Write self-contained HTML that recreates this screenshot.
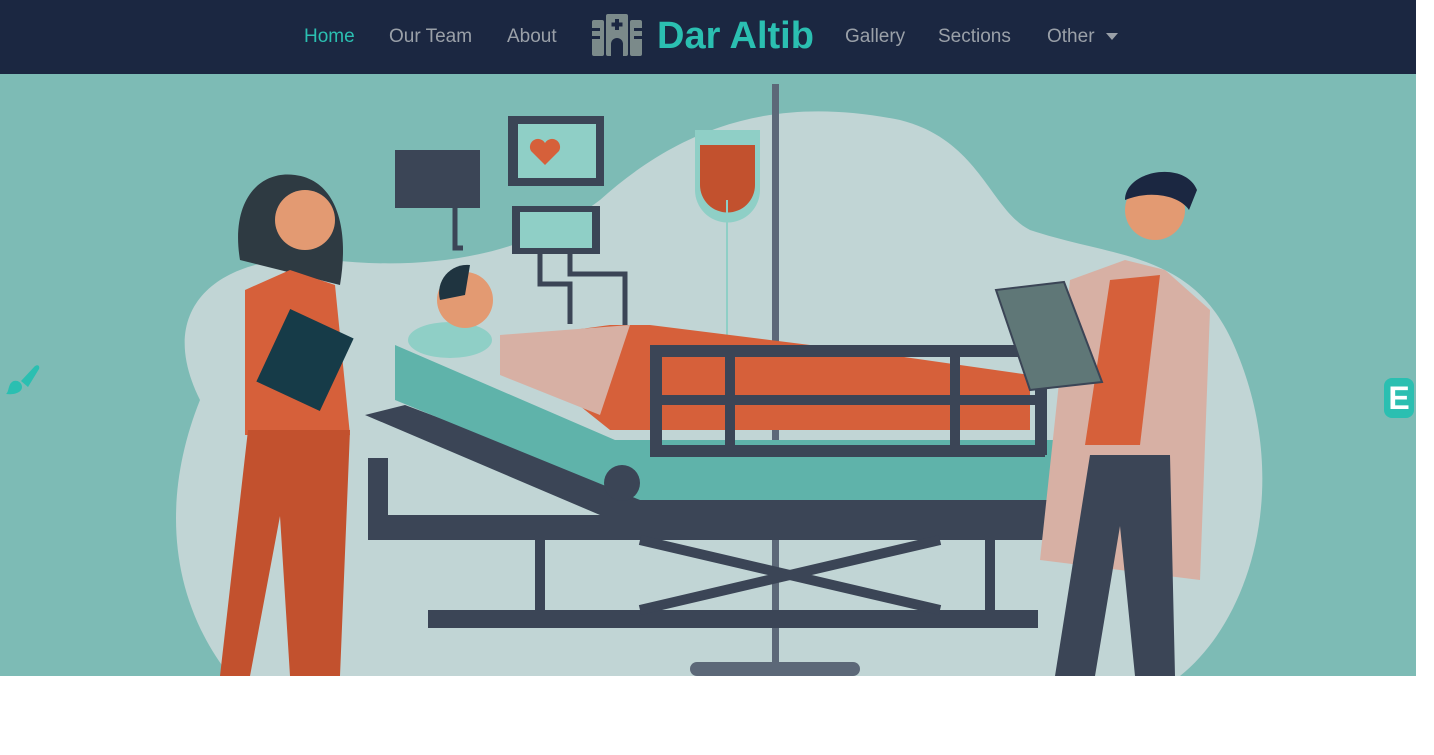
<!DOCTYPE html>
<html><head><meta charset="utf-8"><style>
body{margin:0;width:1434px;height:755px;background:#fff;overflow:hidden;font-family:"Liberation Sans",sans-serif}
nav{position:absolute;left:0;top:0;width:1416px;height:74px;background:#1b2741}
nav a{position:absolute;top:26px;font-size:19px;color:#9aa0a8;text-decoration:none}
.hero{position:absolute;left:0;top:74px;width:1416px;height:602px;background:#7dbbb5;overflow:hidden}
</style></head><body>
<nav>
<a style="left:304px;color:#2bbfb1">Home</a>
<a style="left:389px">Our Team</a>
<a style="left:507px">About</a>
<svg style="position:absolute;left:590px;top:14px" width="54" height="42" viewBox="0 0 54 42"><g fill="#7b8a8a"><rect x="2" y="6" width="12" height="36" rx="2"/><rect x="40" y="6" width="12" height="36" rx="2"/><rect x="16" y="0" width="22" height="42" rx="2"/></g><g fill="#1b2741"><rect x="2" y="14" width="8" height="3"/><rect x="2" y="22" width="8" height="3"/><rect x="44" y="14" width="8" height="3"/><rect x="44" y="22" width="8" height="3"/><rect x="25" y="5" width="4" height="11"/><rect x="21.5" y="8.5" width="11" height="4"/><path d="M21 42V30a6 6 0 0 1 12 0v12z"/></g></svg>
<a style="left:657px;top:15px;font-size:38px;font-weight:bold;color:#2bbfb1">Dar Altib</a>
<a style="left:845px">Gallery</a>
<a style="left:938px">Sections</a>
<a style="left:1047px">Other</a>
<svg style="position:absolute;left:1106px;top:33px" width="12" height="7"><path d="M0 0h12L6 7z" fill="#9aa0a8"/></svg>
</nav>
<div class="hero">
<svg width="1416" height="602" viewBox="0 74 1416 602">
<path d="M200 400C150 300 230 250 330 260 420 270 520 260 600 200 700 110 800 100 900 120 980 140 990 210 1030 230 1120 260 1200 250 1240 360 1290 490 1250 620 1180 676H230C170 600 160 500 200 400Z" fill="#c1d5d5"/>
<rect x="395" y="150" width="85" height="58" fill="#3b4556"/>
<rect x="508" y="116" width="96" height="70" fill="#3b4556"/><rect x="518" y="124" width="78" height="54" fill="#8fcfc6"/>
<path d="M545 165l-14-14a8 8 0 0 1 14-8 8 8 0 0 1 14 8z" fill="#d6603a"/>
<rect x="512" y="206" width="88" height="48" fill="#3b4556"/><rect x="520" y="212" width="72" height="36" fill="#8fcfc6"/>
<path d="M455 208v40h8M540 254v30h30v40M570 254v20h55v60" stroke="#3b4556" stroke-width="5" fill="none"/>
<rect x="772" y="84" width="7" height="580" fill="#5c6878"/>
<path d="M695 130h65v60a30 30 0 0 1-65 0z" fill="#8fcfc6"/><path d="M700 145h55v40a27 27 0 0 1-55 0z" fill="#c2512e"/>
<path d="M727 200v140" stroke="#8fcfc6" stroke-width="2"/>
<rect x="368" y="458" width="20" height="80" fill="#3b4556"/>
<rect x="368" y="515" width="700" height="25" fill="#3b4556"/>
<rect x="428" y="610" width="610" height="18" fill="#3b4556"/>
<path d="M540 540v80M990 540v80M640 540l300 70M940 540l-300 70" stroke="#3b4556" stroke-width="10"/>
<path d="M365 415l40-10 240 90H1060v20H600z" fill="#3b4556"/>
<path d="M395 345l220 95H1060v60H640L395 400z" fill="#5fb3aa"/>
<ellipse cx="450" cy="340" rx="42" ry="18" fill="#8fcfc6"/>
<path d="M500 340l110-15h40l240 30 140 20v55H610L560 390z" fill="#d6603a"/>
<path d="M500 335l130-10-30 90-100-40z" fill="#d7b0a4"/>
<circle cx="465" cy="300" r="28" fill="#e39a72"/><path d="M440 300a28 28 0 0 1 30-35l-5 30z" fill="#1f3440"/>
<rect x="650" y="345" width="395" height="12" fill="#3b4556"/><rect x="650" y="395" width="395" height="10" fill="#3b4556"/><rect x="650" y="445" width="395" height="12" fill="#3b4556"/>
<rect x="650" y="345" width="12" height="110" fill="#3b4556"/><rect x="1035" y="345" width="12" height="110" fill="#3b4556"/><rect x="725" y="345" width="10" height="110" fill="#3b4556"/><rect x="950" y="345" width="10" height="110" fill="#3b4556"/>
<circle cx="622" cy="483" r="18" fill="#3b4556"/>
<rect x="690" y="662" width="170" height="14" rx="7" fill="#5c6878"/>
<path d="M240 260c-10-60 20-90 55-85 40 5 55 50 45 110z" fill="#2e3a42"/>
<circle cx="305" cy="220" r="30" fill="#e39a72"/>
<path d="M245 290l45-20 45 15 15 150H245z" fill="#d6603a"/>
<path d="M248 430h102l-10 246h-50l-10-160-30 160h-30z" fill="#c2512e"/>
<rect x="270" y="320" width="70" height="80" transform="rotate(25 305 360)" fill="#163b48"/>
<circle cx="1155" cy="210" r="30" fill="#e39a72"/><path d="M1125 200c0-30 60-40 72-10l-8 20c-10-15-40-20-64-10z" fill="#1b2741"/>
<path d="M1070 280l55-20 40 10 45 40-10 270-160-20z" fill="#d7b0a4"/>
<path d="M1110 280l50-5-20 170h-55z" fill="#d6603a"/>
<path d="M1090 455h80l5 221h-40l-15-150-25 150h-40z" fill="#3b4556"/>
<path d="M996 290l68-8 38 100-72 8z" fill="#5f7777" stroke="#3b4556" stroke-width="2"/>
</svg>
<svg style="position:absolute;left:4px;top:288px" width="36" height="36" viewBox="0 0 36 36"><path d="M17 19l14-15c3-2 5 0 4 3L24 25z" fill="#2bbfb1"/><path d="M8 20c4-3 10 0 10 5 0 6-9 8-16 7 3-2 2-9 6-12z" fill="#2bbfb1"/></svg>
<div style="position:absolute;left:1384px;top:304px;width:30px;height:40px;background:#2bbfb1;border-radius:8px;color:#fff;font-weight:bold;font-size:32px;line-height:40px;text-align:center">E</div>
</div>
</body></html>
